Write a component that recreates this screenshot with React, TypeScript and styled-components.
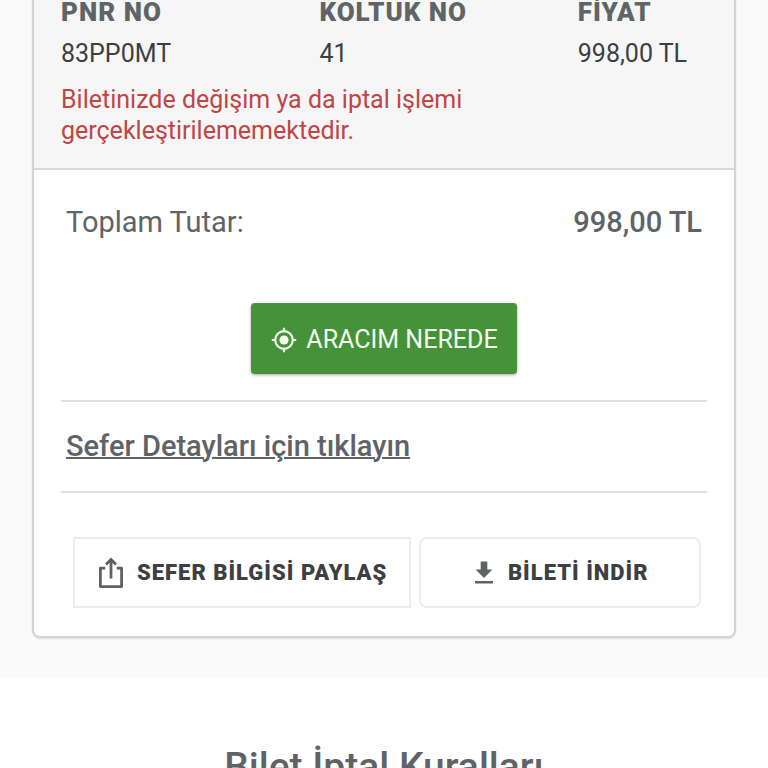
import React from "react";
import styled, { createGlobalStyle } from "styled-components";

const GlobalStyle = createGlobalStyle`
  *, *::before, *::after { box-sizing: border-box; }
  body {
    margin: 0;
    background: #fefefe;
    color: #5f6368;
    font-family: Roboto, "Liberation Sans", sans-serif;
  }
`;

const TicketSection = styled.main`
  padding: 0 32px 40px;
  background: #fafafa;
`;

const Card = styled.article`
  overflow: hidden;
  border: 2px solid #d3d4d5;
  border-top: 0;
  border-radius: 0 0 8px 8px;
  background: #fefefe;
  box-shadow: 0 1px 2px rgba(0, 0, 0, 0.12);
`;

const TicketInfo = styled.header`
  padding: 0 27px 22px;
  border-bottom: 2px solid #d8d8d8;
  background: #f6f6f6;
`;

const Facts = styled.dl`
  display: grid;
  grid-template-columns: 2fr 2fr 1fr;
  margin: 0;
`;

const Fact = styled.div`
  white-space: nowrap;
`;

const FactLabel = styled.dt`
  color: #5f6567;
  font-size: 26px;
  font-weight: 900;
  line-height: 24px;
  letter-spacing: 1px;
`;

const FactValue = styled.dd`
  margin: 14px 0 0;
  color: #3c3f42;
  font-size: 25px;
  line-height: 32px;
`;

const Warning = styled.p`
  margin: 14px 0 0;
  color: #c04545;
  font-size: 25px;
  line-height: 31px;
`;

const CardBody = styled.div`
  padding: 32px 27px 28px;
`;

const Total = styled.div`
  display: flex;
  justify-content: space-between;
  padding: 0 5px;
  font-size: 29px;
  line-height: 40px;
`;

const Amount = styled.strong`
  font-weight: 500;
`;

const TrackButton = styled.button`
  display: flex;
  align-items: center;
  gap: 8px;
  margin: 61px auto 26px;
  padding: 2px 19px 0;
  height: 71px;
  border: 0;
  border-radius: 4px;
  background: #469238;
  box-shadow: 0 1px 3px rgba(0, 0, 0, 0.35);
  color: #f4fff0;
  font: 400 25px/32px Roboto, sans-serif;
  cursor: pointer;
`;

const DetailsRow = styled.div`
  padding: 24px 5px 25px;
  border: solid #dedede;
  border-width: 2px 0;
`;

const DetailsLink = styled.a`
  display: block;
  color: inherit;
  font-size: 29px;
  font-weight: 500;
  line-height: 40px;
  text-decoration: underline;
  text-decoration-thickness: 2px;
`;

const Actions = styled.div`
  display: flex;
  gap: 8px;
  padding: 44px 6px 0 12px;
`;

const ActionButton = styled.button<{ $fill?: boolean }>`
  display: flex;
  flex: ${({ $fill }) => ($fill ? "1 1 0" : "0 0 auto")};
  align-items: center;
  justify-content: center;
  gap: 12px;
  height: 71px;
  padding: 0 22px;
  border: 2px solid #ededed;
  border-radius: ${({ $fill }) => ($fill ? "8px" : "0")};
  background: #ffffff;
  color: #3c4043;
  font: 900 22px/28px Roboto, sans-serif;
  letter-spacing: 1px;
  white-space: nowrap;
  cursor: pointer;
`;

const Rules = styled.section`
  padding: 65px 32px 40px;
`;

const RulesTitle = styled.h2`
  margin: 0;
  font-size: 39px;
  font-weight: 500;
  line-height: 48px;
  text-align: center;
`;

const TargetIcon = () => (
  <svg width="28" height="28" viewBox="0 0 28 28" fill="none" stroke="currentColor" strokeWidth="2.2" aria-hidden="true">
    <circle cx="14" cy="14" r="8.8" />
    <circle cx="14" cy="14" r="4.6" fill="currentColor" stroke="none" />
    <path d="M14 1.8V5.5M14 22.5v3.7M1.8 14h3.7M22.5 14h3.7" />
  </svg>
);

const ShareIcon = () => (
  <svg width="28" height="32" viewBox="0 0 28 32" fill="none" stroke="#5f6163" strokeWidth="2.8" aria-hidden="true">
    <path d="M8.2 11.2H3.4v18.4h21.2V11.2h-4.8" strokeLinejoin="round" />
    <path d="M14 21.5V2.8M9 7.4l5-5 5 5" />
  </svg>
);

const DownloadIcon = () => (
  <svg width="24" height="24" viewBox="0 0 24 24" fill="#5f6366" aria-hidden="true">
    <path d="M8.7 0.5h6.6v8h5.1L12 16.9 3.6 8.5h5.1zM3 19.9h18v2.5H3z" />
  </svg>
);

const facts = [
  { label: "PNR NO", value: "83PP0MT" },
  { label: "KOLTUK NO", value: "41" },
  { label: "FİYAT", value: "998,00 TL" },
];

export default function App() {
  return (
    <>
      <GlobalStyle />
      <TicketSection lang="tr">
        <Card>
          <TicketInfo>
            <Facts>
              {facts.map(({ label, value }) => (
                <Fact key={label}>
                  <FactLabel>{label}</FactLabel>
                  <FactValue>{value}</FactValue>
                </Fact>
              ))}
            </Facts>
            <Warning>Biletinizde değişim ya da iptal işlemi gerçekleştirilememektedir.</Warning>
          </TicketInfo>
          <CardBody>
            <Total>
              <span>Toplam Tutar:</span>
              <Amount>998,00 TL</Amount>
            </Total>
            <TrackButton type="button">
              <TargetIcon />
              ARACIM NEREDE
            </TrackButton>
            <DetailsRow>
              <DetailsLink href="#sefer">Sefer Detayları için tıklayın</DetailsLink>
            </DetailsRow>
            <Actions>
              <ActionButton type="button">
                <ShareIcon />
                SEFER BİLGİSİ PAYLAŞ
              </ActionButton>
              <ActionButton type="button" $fill>
                <DownloadIcon />
                BİLETİ İNDİR
              </ActionButton>
            </Actions>
          </CardBody>
        </Card>
      </TicketSection>
      <Rules lang="tr">
        <RulesTitle>Bilet İptal Kuralları</RulesTitle>
      </Rules>
    </>
  );
}
